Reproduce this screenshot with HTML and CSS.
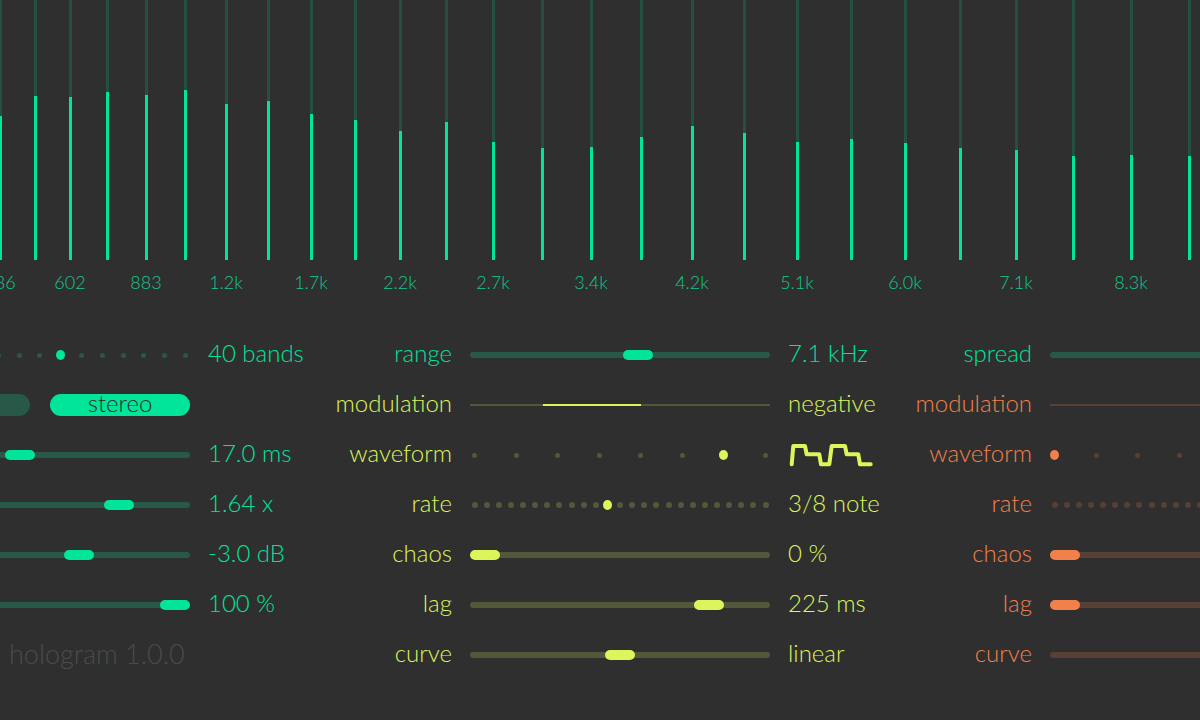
FILE: index.html
```html
<!DOCTYPE html>
<html lang="en">
<head>
    <meta charset="UTF-8">
    <meta name="viewport" content="width=device-width, initial-scale=1.0">
    <title>hologram</title>
    <link rel="stylesheet" href="styles.css">
</head>
<body>
    <div class="spectrum">
        <div class="bar" style="left:-1px"><div class="level" style="height:144px"></div></div>
        <div class="bar" style="left:34px"><div class="level" style="height:164px"></div></div>
        <div class="bar" style="left:69px"><div class="level" style="height:163px"></div></div>
        <div class="bar" style="left:106px"><div class="level" style="height:168px"></div></div>
        <div class="bar" style="left:145px"><div class="level" style="height:165px"></div></div>
        <div class="bar" style="left:184px"><div class="level" style="height:170px"></div></div>
        <div class="bar" style="left:225px"><div class="level" style="height:156px"></div></div>
        <div class="bar" style="left:267px"><div class="level" style="height:159px"></div></div>
        <div class="bar" style="left:310px"><div class="level" style="height:146px"></div></div>
        <div class="bar" style="left:354px"><div class="level" style="height:140px"></div></div>
        <div class="bar" style="left:399px"><div class="level" style="height:129px"></div></div>
        <div class="bar" style="left:445px"><div class="level" style="height:138px"></div></div>
        <div class="bar" style="left:492px"><div class="level" style="height:118px"></div></div>
        <div class="bar" style="left:541px"><div class="level" style="height:112px"></div></div>
        <div class="bar" style="left:590px"><div class="level" style="height:113px"></div></div>
        <div class="bar" style="left:640px"><div class="level" style="height:123px"></div></div>
        <div class="bar" style="left:691px"><div class="level" style="height:134px"></div></div>
        <div class="bar" style="left:743px"><div class="level" style="height:127px"></div></div>
        <div class="bar" style="left:796px"><div class="level" style="height:118px"></div></div>
        <div class="bar" style="left:850px"><div class="level" style="height:121px"></div></div>
        <div class="bar" style="left:904px"><div class="level" style="height:117px"></div></div>
        <div class="bar" style="left:959px"><div class="level" style="height:112px"></div></div>
        <div class="bar" style="left:1015px"><div class="level" style="height:110px"></div></div>
        <div class="bar" style="left:1072px"><div class="level" style="height:104px"></div></div>
        <div class="bar" style="left:1130px"><div class="level" style="height:105px"></div></div>
        <div class="bar" style="left:1188px"><div class="level" style="height:104px"></div></div>
    </div>
    <div class="freqs">
        <span class="freq" style="left:0px">386</span>
        <span class="freq" style="left:70px">602</span>
        <span class="freq" style="left:146px">883</span>
        <span class="freq" style="left:226px">1.2k</span>
        <span class="freq" style="left:311px">1.7k</span>
        <span class="freq" style="left:400px">2.2k</span>
        <span class="freq" style="left:493px">2.7k</span>
        <span class="freq" style="left:591px">3.4k</span>
        <span class="freq" style="left:692px">4.2k</span>
        <span class="freq" style="left:797px">5.1k</span>
        <span class="freq" style="left:905px">6.0k</span>
        <span class="freq" style="left:1016px">7.1k</span>
        <span class="freq" style="left:1131px">8.3k</span>
    </div>

    <div class="panel">
        <!-- left column (partly off screen) -->
        <div class="col">
            <div class="row green">
                <span class="label"></span>
                <div class="dots">
                    <i></i><i></i><i></i><i></i><i></i><i></i><i></i><i></i>
                    <i class="on"></i><i></i><i></i><i></i><i></i><i></i><i></i>
                </div>
                <span class="value">40 bands</span>
            </div>
            <div class="row green">
                <span class="label"></span>
                <div class="pills">
                    <span class="pill"></span>
                    <span class="pill on">stereo</span>
                </div>
                <span class="value"></span>
            </div>
            <div class="row green">
                <span class="label"></span>
                <div class="slider"><div class="track"></div><div class="thumb" style="left:115px"></div></div>
                <span class="value">17.0 ms</span>
            </div>
            <div class="row green">
                <span class="label"></span>
                <div class="slider"><div class="track"></div><div class="thumb" style="left:214px"></div></div>
                <span class="value">1.64 x</span>
            </div>
            <div class="row green">
                <span class="label"></span>
                <div class="slider"><div class="track"></div><div class="thumb" style="left:174px"></div></div>
                <span class="value">-3.0 dB</span>
            </div>
            <div class="row green">
                <span class="label"></span>
                <div class="slider"><div class="track"></div><div class="thumb" style="left:270px"></div></div>
                <span class="value">100 %</span>
            </div>
            <div class="row">
                <span class="label"></span>
                <span class="version">hologram 1.0.0</span>
            </div>
        </div>

        <!-- middle column -->
        <div class="col">
            <div class="row green">
                <span class="label">range</span>
                <div class="slider"><div class="track"></div><div class="thumb" style="left:153px"></div></div>
                <span class="value">7.1 kHz</span>
            </div>
            <div class="row yellow">
                <span class="label">modulation</span>
                <div class="mod"><div class="mod-on" style="left:73px;width:98px"></div></div>
                <span class="value">negative</span>
            </div>
            <div class="row yellow">
                <span class="label">waveform</span>
                <div class="dots">
                    <i></i><i></i><i></i><i></i><i></i><i></i><i class="on"></i><i></i>
                </div>
                <span class="value">
                    <svg class="wave" width="86" height="26" viewBox="0 0 86 26">
                        <polyline points="3.7,22.3 5.3,4 17,4 18.7,12.3 31.3,12.3 33,22.3 41.3,22.3 43.7,4 57,4 58.7,12.3 70.3,12.3 72,22.3 82.7,22.3"/>
                    </svg>
                </span>
            </div>
            <div class="row yellow">
                <span class="label">rate</span>
                <div class="dots fine">
                    <i></i><i></i><i></i><i></i><i></i><i></i><i></i><i></i><i></i><i></i><i></i>
                    <i class="on"></i>
                    <i></i><i></i><i></i><i></i><i></i><i></i><i></i><i></i><i></i><i></i><i></i><i></i><i></i>
                </div>
                <span class="value">3/8 note</span>
            </div>
            <div class="row yellow">
                <span class="label">chaos</span>
                <div class="slider"><div class="track"></div><div class="thumb" style="left:0px"></div></div>
                <span class="value">0 %</span>
            </div>
            <div class="row yellow">
                <span class="label">lag</span>
                <div class="slider"><div class="track"></div><div class="thumb" style="left:224px"></div></div>
                <span class="value">225 ms</span>
            </div>
            <div class="row yellow">
                <span class="label">curve</span>
                <div class="slider"><div class="track"></div><div class="thumb" style="left:135px"></div></div>
                <span class="value">linear</span>
            </div>
        </div>

        <!-- right column (runs off screen) -->
        <div class="col">
            <div class="row green">
                <span class="label">spread</span>
                <div class="slider"><div class="track"></div><div class="thumb" style="left:200px"></div></div>
                <span class="value"></span>
            </div>
            <div class="row orange">
                <span class="label">modulation</span>
                <div class="mod"></div>
                <span class="value"></span>
            </div>
            <div class="row orange">
                <span class="label">waveform</span>
                <div class="dots">
                    <i class="on"></i><i></i><i></i><i></i><i></i><i></i><i></i><i></i>
                </div>
                <span class="value"></span>
            </div>
            <div class="row orange">
                <span class="label">rate</span>
                <div class="dots fine">
                    <i></i><i></i><i></i><i></i><i></i><i></i><i></i><i></i><i></i><i></i><i></i><i></i><i></i><i></i><i></i><i></i><i></i><i></i>
                    <i class="on"></i>
                    <i></i><i></i><i></i><i></i><i></i><i></i>
                </div>
                <span class="value"></span>
            </div>
            <div class="row orange">
                <span class="label">chaos</span>
                <div class="slider"><div class="track"></div><div class="thumb" style="left:0px"></div></div>
                <span class="value"></span>
            </div>
            <div class="row orange">
                <span class="label">lag</span>
                <div class="slider"><div class="track"></div><div class="thumb" style="left:0px"></div></div>
                <span class="value"></span>
            </div>
            <div class="row orange">
                <span class="label">curve</span>
                <div class="slider"><div class="track"></div><div class="thumb" style="left:220px"></div></div>
                <span class="value"></span>
            </div>
        </div>
    </div>
</body>
</html>
```

FILE: styles.css
```css
body {
    margin: 0;
    padding: 0;
    height: 100vh;
    overflow: hidden;
    background: #2f2f2f;
    font-family: 'Lato', 'Open Sans', sans-serif;
    font-weight: 300;
}

/* spectrum */
.spectrum {
    position: relative;
    height: 260px;
}
.bar {
    position: absolute;
    top: 0;
    bottom: 0;
    width: 3px;
    background: #24513f;
}
.level {
    position: absolute;
    left: 0;
    bottom: 0;
    width: 3px;
    background: #00e599;
}
.freqs {
    position: relative;
    height: 44px;
}
.freq {
    position: absolute;
    top: 0;
    line-height: 44px;
    font-size: 18px;
    color: #13c98a;
    transform: translateX(-50%);
}

/* controls */
.panel {
    display: flex;
    margin-top: 26px;
    margin-left: -278px;
}
.col {
    flex: none;
    width: 580px;
    display: flex;
    flex-direction: column;
}
.row {
    display: grid;
    grid-template-columns: 150px 300px 1fr;
    column-gap: 18px;
    align-items: center;
    height: 50px;
    font-size: 24px;
    --hi: #00e599;
    --lo: #285848;
}
.row.yellow {
    --hi: #dcf55a;
    --lo: #55573a;
}
.row.orange {
    --hi: #f2804a;
    --lo: #574034;
}
.label, .value {
    color: var(--hi);
    white-space: nowrap;
    padding-bottom: 5px;
}
.label {
    text-align: right;
}
.value {
    display: flex;
    align-items: center;
}

.slider {
    position: relative;
    height: 10px;
    display: flex;
    align-items: center;
}
.track {
    width: 100%;
    height: 6px;
    border-radius: 3px;
    background: var(--lo);
}
.thumb {
    position: absolute;
    top: 0;
    width: 30px;
    height: 10px;
    border-radius: 5px;
    background: var(--hi);
}

.mod {
    position: relative;
    height: 2px;
    background: var(--lo);
}
.mod-on {
    position: absolute;
    top: 0;
    height: 2px;
    background: var(--hi);
}

.dots {
    display: flex;
    justify-content: space-between;
    align-items: center;
    height: 10px;
}
.dots i {
    width: 9px;
    height: 9px;
    display: flex;
    align-items: center;
    justify-content: center;
}
.dots i::after {
    content: '';
    width: 5px;
    height: 5px;
    border-radius: 50%;
    background: var(--lo);
}
.dots.fine i::after {
    width: 6px;
    height: 6px;
}
.dots i.on::after {
    width: 10px;
    height: 10px;
    background: var(--hi);
}

.pills {
    display: flex;
    gap: 20px;
}
.pill {
    flex: 1;
    height: 22px;
    line-height: 18px;
    border-radius: 11px;
    background: var(--lo);
    text-align: center;
    color: #2b2b2b;
}
.pill.on {
    background: var(--hi);
}

.wave {
    display: block;
    margin-top: 5px;
}
.wave polyline {
    fill: none;
    stroke: #dcf55a;
    stroke-width: 4;
    stroke-linejoin: round;
    stroke-linecap: round;
}

.version {
    grid-column: 2 / 4;
    padding-left: 119px;
    padding-bottom: 4px;
    font-size: 27px;
    color: #4b4b4b;
    white-space: nowrap;
}
```
